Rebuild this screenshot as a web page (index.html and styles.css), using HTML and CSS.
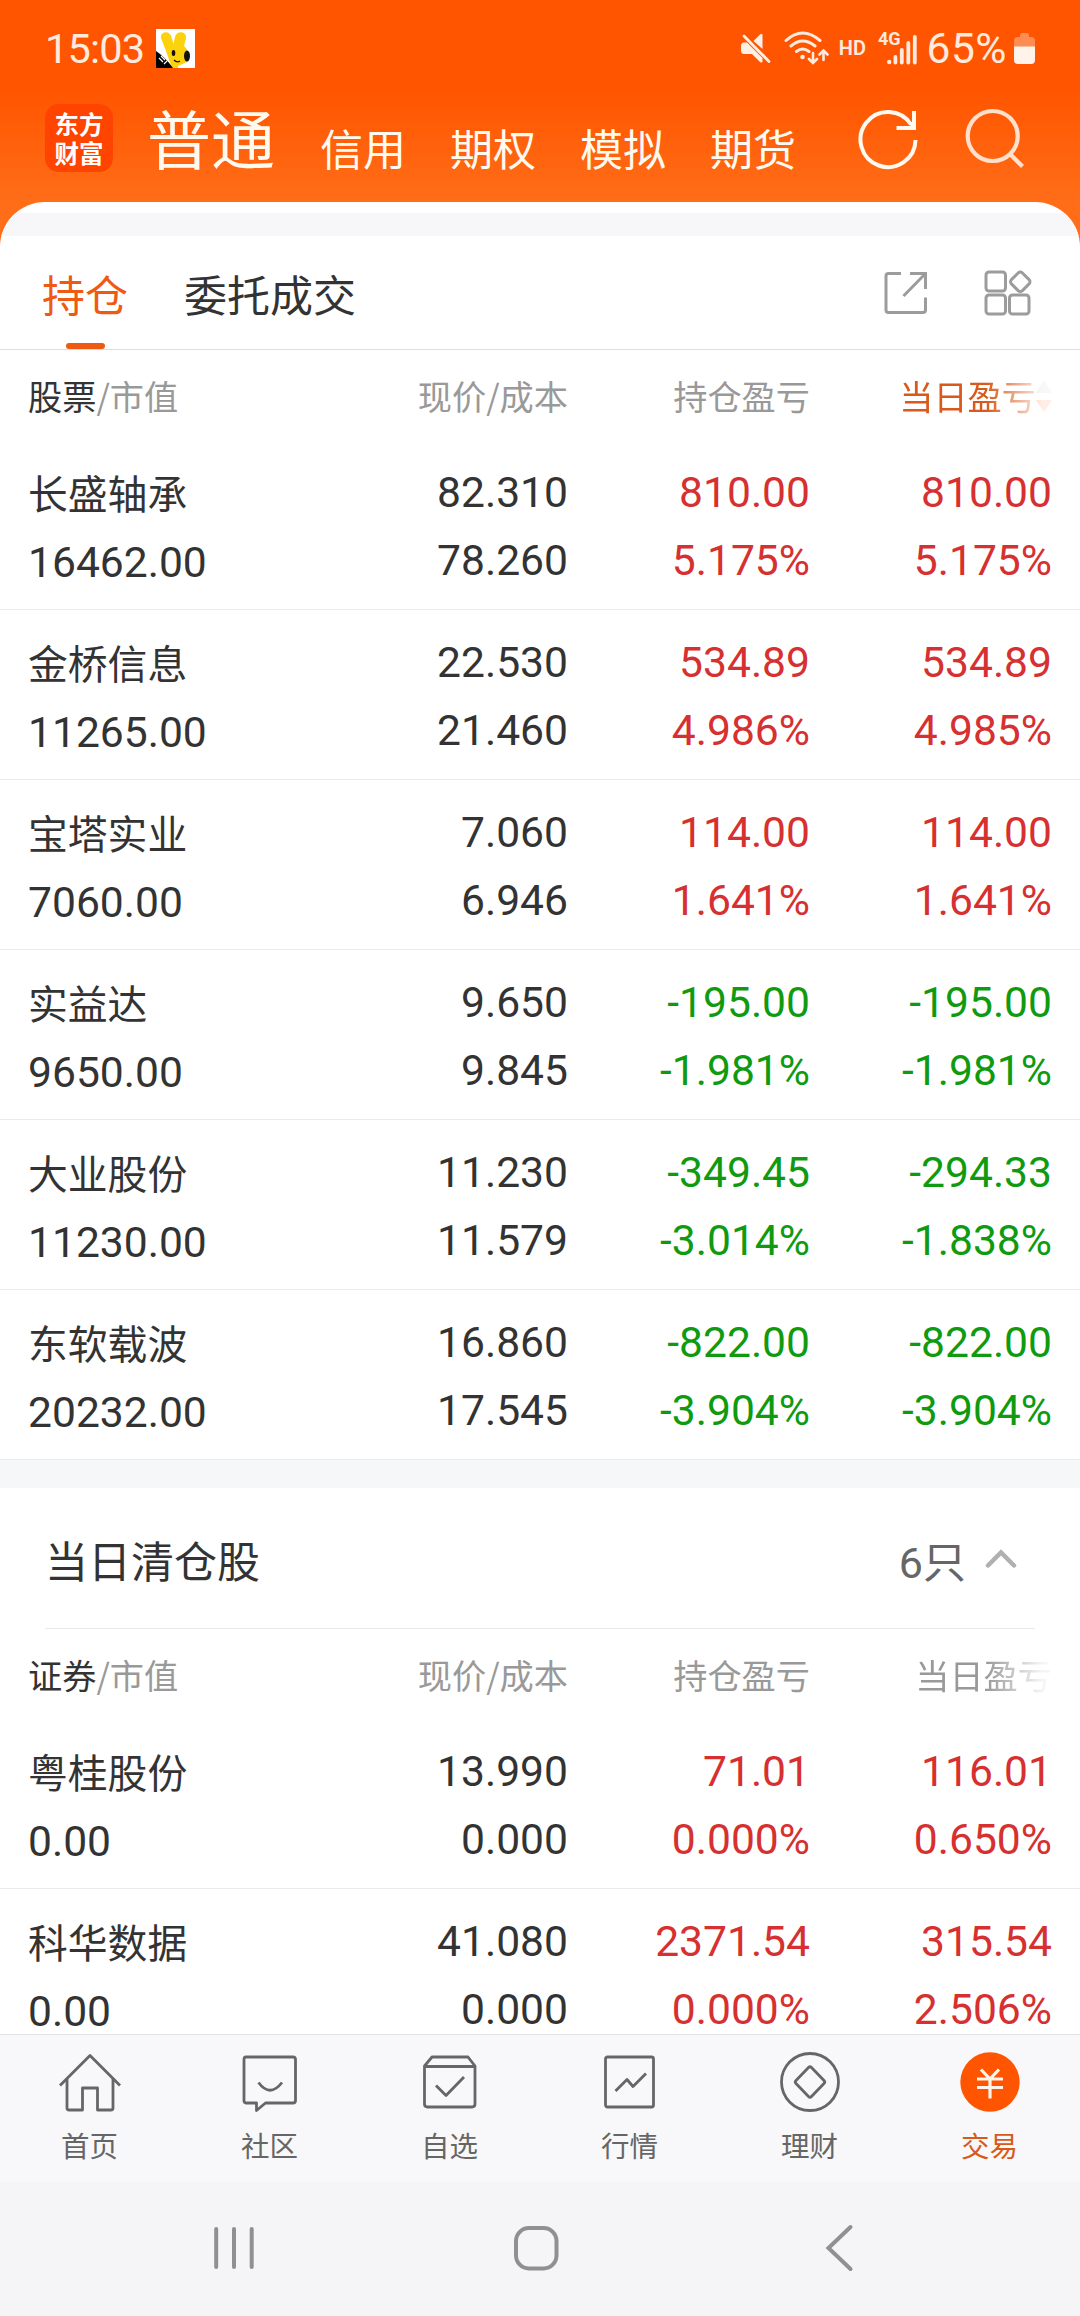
FILE: index.html
```html
<!DOCTYPE html>
<html lang="zh-CN">

<head>
    <meta charset="UTF-8">
    <meta name="viewport" content="width=device-width, initial-scale=1.0">
    <title>持仓</title>
    <link rel="stylesheet" href="styles.css">
</head>

<body>
    <header class="header">
        <!-- 状态栏 -->
        <div class="status-bar">
            <span class="time">15:03</span>
            <svg class="app-notice" width="39" height="39" viewBox="0 0 39 39">
                <rect width="39" height="39" fill="#fff"/>
                <path d="M10 22 L5 9 C4 2 14 1 15.500 8 L17.500 15 L19 8 C20 1 31 2 30 9 L28 17 C33 21 34 28 31 33 L22 37 V39 H16 Z" fill="#fcd20c"/>
                <ellipse cx="17.500" cy="24" rx="1.800" ry="3" fill="#111"/>
                <ellipse cx="31" cy="27" rx="3" ry="5.500" fill="#111"/>
                <path d="M18 31 Q21 34 24 32" fill="none" stroke="#111" stroke-width="1.200"/>
                <path d="M0 22 Q9 28 17 39 H0 Z" fill="#000"/>
                <path d="M3 29 L7 33 M5 27 L9 31 M8 35 L11 32" stroke="#fff" stroke-width="1.200"/>
            </svg>
            <div class="status-icons">
                <svg class="mute" width="30" height="30" viewBox="0 0 30 30">
                    <path d="M0 13 Q0 9.500 3 9.500 H6 L21.500 25 V28 Q21.500 30.500 19 29 L11 21 H3 Q0 21 0 17.500 Z M12.500 8 L19 1.500 Q21.500 -0.500 21.500 2.500 V16 Z" fill="#fff0e6"/>
                    <path d="M3 3 L28 28.500" stroke="#fff0e6" stroke-width="2.800" stroke-linecap="round"/>
                </svg>
                <svg class="wifi" width="45" height="34" viewBox="0 0 45 34" fill="none" stroke="#ffeadd" stroke-width="3" stroke-linecap="round">
                    <path d="M2 9.500 Q18.500 -5.500 36 9.500 M7 15 Q18.500 5 31 15 M12.500 20.500 Q18.500 15.500 25 20.500"/>
                    <circle cx="18.500" cy="26" r="2.300" fill="#ffeadd" stroke="none"/>
                    <path d="M29 22 V31 M25 28 L29 32 L33 28 M39.500 29 V20 M35.500 23.500 L39.500 19.500 L43.500 23.500" stroke-width="2.600"/>
                </svg>
                <span class="hd">HD</span>
                <span class="net">4G</span>
                <svg class="signal" width="30" height="34" viewBox="0 0 30 34" fill="#ffeadd">
                    <circle cx="2.200" cy="31" r="2.200"/>
                    <rect x="6.500" y="24" width="3.800" height="9.500" rx="1.900"/>
                    <rect x="12.900" y="17" width="3.800" height="16.500" rx="1.900"/>
                    <rect x="19.400" y="10" width="3.800" height="23.500" rx="1.900"/>
                    <rect x="25.900" y="4" width="3.800" height="29.500" rx="1.900"/>
                </svg>
                <span class="percent">65%</span>
                <svg class="battery" width="21" height="31" viewBox="0 0 21 31">
                    <path d="M6 4 V2 Q6 0 8 0 H13 Q15 0 15 2 V4 H17 Q21 4 21 8 V14 H0 V8 Q0 4 4 4 Z" fill="#ff8c52"/>
                    <path d="M0 13.500 H21 V27 Q21 31 17 31 H4 Q0 31 0 27 Z" fill="#fff3eb"/>
                </svg>
            </div>
        </div>

        <!-- 账户类型 -->
        <div class="account-bar">
            <div class="logo"><span>东方</span><span>财富</span></div>
            <span class="account active">普通</span>
            <span class="account">信用</span>
            <span class="account">期权</span>
            <span class="account">模拟</span>
            <span class="account">期货</span>
            <svg class="refresh" width="62" height="64" viewBox="0 0 62 64" fill="none" stroke="#fff9f0" stroke-width="4">
                <path d="M58.500 33 A27.500 27.500 0 1 1 54 17.500"/>
                <path d="M39.500 21 H57 V4"/>
                <path d="M48 11 L57 20" stroke-width="3"/>
            </svg>
            <svg class="search" width="60" height="60" viewBox="0 0 60 60" fill="none" stroke="#ffe0cc" stroke-width="4.200">
                <circle cx="27.700" cy="28" r="25"/>
                <path d="M45 46 L57.500 58.500"/>
            </svg>
        </div>
    </header>

    <main class="sheet">
        <div class="band"></div>
        <div class="tabs">
            <span class="tab active">持仓</span>
            <span class="tab">委托成交</span>
            <svg class="export" width="44" height="44" viewBox="0 0 44 44" fill="none" stroke="#9c9c9c" stroke-width="3">
                <path d="M17 2.500 H4.500 Q2 2.500 2 5 V39 Q2 41.500 4.500 41.500 H39 Q41.500 41.500 41.500 39 V26.500"/>
                <path d="M26 2.500 H41.500 V18 M41.500 2.500 L19.500 25"/>
            </svg>
            <svg class="grid-icon" width="48" height="46" viewBox="0 0 48 46" fill="none" stroke="#9c9c9c" stroke-width="3">
                <rect x="2" y="2" width="19.500" height="19" rx="3"/>
                <rect x="2" y="25" width="19.500" height="19" rx="3"/>
                <rect x="25.500" y="25" width="19.500" height="19" rx="3"/>
                <rect x="28.500" y="4" width="15.500" height="15.500" rx="3" transform="rotate(45 36.200 11.800)"/>
            </svg>
        </div>

        <!-- 当前持仓 -->
        <div class="row-head">
            <span><b>股票</b>/市值</span>
            <span>现价/成本</span>
            <span>持仓盈亏</span>
            <span class="sort fade">当日盈亏<svg width="16" height="34" viewBox="0 0 16 34"><path d="M8 1 L16 14 H0 Z" fill="#bbb"/><path d="M0 21 H16 L8 33 Z" fill="#ff5500"/></svg></span>
        </div>
        <div class="row">
            <div class="stock"><p>长盛轴承</p><p>16462.00</p></div>
            <div><p>82.310</p><p>78.260</p></div>
            <div class="up"><p>810.00</p><p>5.175%</p></div>
            <div class="up"><p>810.00</p><p>5.175%</p></div>
        </div>
        <div class="row">
            <div class="stock"><p>金桥信息</p><p>11265.00</p></div>
            <div><p>22.530</p><p>21.460</p></div>
            <div class="up"><p>534.89</p><p>4.986%</p></div>
            <div class="up"><p>534.89</p><p>4.985%</p></div>
        </div>
        <div class="row">
            <div class="stock"><p>宝塔实业</p><p>7060.00</p></div>
            <div><p>7.060</p><p>6.946</p></div>
            <div class="up"><p>114.00</p><p>1.641%</p></div>
            <div class="up"><p>114.00</p><p>1.641%</p></div>
        </div>
        <div class="row">
            <div class="stock"><p>实益达</p><p>9650.00</p></div>
            <div><p>9.650</p><p>9.845</p></div>
            <div class="down"><p>-195.00</p><p>-1.981%</p></div>
            <div class="down"><p>-195.00</p><p>-1.981%</p></div>
        </div>
        <div class="row">
            <div class="stock"><p>大业股份</p><p>11230.00</p></div>
            <div><p>11.230</p><p>11.579</p></div>
            <div class="down"><p>-349.45</p><p>-3.014%</p></div>
            <div class="down"><p>-294.33</p><p>-1.838%</p></div>
        </div>
        <div class="row">
            <div class="stock"><p>东软载波</p><p>20232.00</p></div>
            <div><p>16.860</p><p>17.545</p></div>
            <div class="down"><p>-822.00</p><p>-3.904%</p></div>
            <div class="down"><p>-822.00</p><p>-3.904%</p></div>
        </div>

        <div class="band band-mid"></div>

        <!-- 当日清仓 -->
        <div class="section-title">
            <span>当日清仓股</span>
            <span class="count">6只</span>
            <svg width="32" height="20" viewBox="0 0 32 20" fill="none" stroke="#b0b0b0" stroke-width="4.500" stroke-linecap="round">
                <path d="M3 16.500 L16 3.500 L29 16.500"/>
            </svg>
        </div>
        <div class="row-head">
            <span><b>证券</b>/市值</span>
            <span>现价/成本</span>
            <span>持仓盈亏</span>
            <span class="fade">当日盈亏</span>
        </div>
        <div class="row">
            <div class="stock"><p>粤桂股份</p><p>0.00</p></div>
            <div><p>13.990</p><p>0.000</p></div>
            <div class="up"><p>71.01</p><p>0.000%</p></div>
            <div class="up"><p>116.01</p><p>0.650%</p></div>
        </div>
        <div class="row last">
            <div class="stock"><p>科华数据</p><p>0.00</p></div>
            <div><p>41.080</p><p>0.000</p></div>
            <div class="up"><p>2371.54</p><p>0.000%</p></div>
            <div class="up"><p>315.54</p><p>2.506%</p></div>
        </div>
    </main>

    <!-- 底部导航 -->
    <nav class="tab-bar">
        <a class="item">
            <svg width="64" height="64" viewBox="0 0 64 64">
                <path d="M2 34.500 L32 4.500 L62 34.500"/>
                <path d="M9 28 V57 Q9 59 11 59 H24.500 V37 H39.500 V59 H53 Q55 59 55 57 V28"/>
            </svg>
            首页
        </a>
        <a class="item">
            <svg width="64" height="64" viewBox="0 0 64 64">
                <path d="M8 6 H55 Q57.500 6 57.500 8.500 V49.500 Q57.500 52 55 52 H27.500 L18.500 59.500 V52 H8 Q6 52 6 49.500 V8.500 Q6 6 8 6 Z"/>
                <path d="M20.500 31.500 Q32 47 44 31.500"/>
            </svg>
            社区
        </a>
        <a class="item">
            <svg width="64" height="64" viewBox="0 0 64 64">
                <path d="M6.500 15 L14 6 H50 L57 15 V53 Q57 56 54 56 H9.500 Q6.500 56 6.500 53 Z M6.500 15.500 H57"/>
                <path d="M18 34.500 L28 44.500 L46 26"/>
            </svg>
            自选
        </a>
        <a class="item">
            <svg width="64" height="64" viewBox="0 0 64 64">
                <rect x="7.500" y="6" width="48" height="50" rx="2"/>
                <path d="M17.500 40 L29 28.500 L35 35.500 L48 22.500"/>
            </svg>
            行情
        </a>
        <a class="item">
            <svg width="64" height="64" viewBox="0 0 64 64">
                <circle cx="32" cy="31" r="28.500"/>
                <path d="M30.500 16.500 Q32 15 33.500 16.500 L46 29.500 Q47.500 31 46 32.500 L33.500 45.500 Q32 47 30.500 45.500 L18 32.500 Q16.500 31 18 29.500 Z"/>
            </svg>
            理财
        </a>
        <a class="item active">
            <svg width="64" height="64" viewBox="0 0 64 64">
                <circle cx="32" cy="31" r="29.700"/>
                <path d="M23 18.500 L32 28 L41 18.500 M19 28 H45 M19 36.500 H45 M32 28 V47.500"/>
            </svg>
            交易
        </a>
    </nav>

    <!-- 系统按键 -->
    <footer class="system-bar">
        <svg class="recent" width="44" height="48" viewBox="0 0 44 48"><path d="M4.200 5 V43 M22 5 V43 M39.700 5 V43"/></svg>
        <svg class="home" width="48" height="48" viewBox="0 0 48 48"><rect x="4" y="4" width="40.500" height="40.500" rx="13"/></svg>
        <svg class="back" width="30" height="48" viewBox="0 0 30 48"><path d="M26.500 3 L4.500 24 L26.500 45"/></svg>
    </footer>
</body>

</html>
```
FILE: styles.css
```css
* {
    box-sizing: border-box;
}

body {
    margin: 0;
    width: 1080px;
    height: 2316px;
    display: flex;
    flex-direction: column;
    overflow: hidden;
    font-family: 'Noto Sans CJK SC', sans-serif;
    font-weight: 400;
    color: #333;
    background: linear-gradient(#ff5500 90px, #ff6d18 200px);
}

p {
    margin: 0;
}

svg {
    display: block;
    flex-shrink: 0;
}

/* 顶部 */
.header {
    height: 202px;
    flex-shrink: 0;
}

.status-bar {
    display: flex;
    align-items: center;
    height: 96px;
    padding: 0 45px;
    font-family: Roboto, sans-serif;
    color: #ffeadd;
}

.time {
    width: 111px;
    font-size: 41.500px;
    letter-spacing: -0.800px;
}

.status-icons {
    display: flex;
    align-items: center;
    margin-left: auto;
}

.wifi {
    margin-left: 13px;
}

.hd {
    margin-left: 10px;
    font-size: 20px;
    font-weight: 600;
}

.net {
    align-self: flex-start;
    margin: 4px 0 0 12px;
    font-size: 18px;
    font-weight: 700;
}

.signal {
    margin-left: -14px;
}

.percent {
    margin-left: 10px;
    font-size: 42.500px;
    letter-spacing: 0.500px;
}

.battery {
    margin-left: 7px;
}

.account-bar {
    display: flex;
    align-items: flex-end;
    height: 82px;
    padding-left: 45px;
    color: #fffaf0;
}

.logo {
    display: flex;
    flex-direction: column;
    justify-content: center;
    width: 68px;
    height: 68px;
    margin: 0 34px 6px 0;
    border-radius: 14px;
    background-color: #ff4400;
    font-size: 24.500px;
    font-weight: 700;
    line-height: 29px;
    text-align: center;
    color: #fff;
}

.account {
    width: 86px;
    margin-right: 44px;
    font-size: 43px;
    line-height: 62px;
    white-space: nowrap;
}

.account.active {
    width: 128px;
    margin-right: 45px;
    font-size: 64px;
    line-height: 84px;
}

.refresh {
    margin: 0 0 7px 17px;
}

.search {
    margin: 0 0 10px 46px;
}

/* 内容区 */
.sheet {
    flex: 1;
    min-height: 0;
    overflow: hidden;
    padding-top: 11px;
    border-radius: 45px 45px 0 0;
    background-color: #fff;
}

.band {
    height: 23px;
    background-color: #f7f7fa;
}

.band-mid {
    height: 28px;
    background-color: #f6f7f9;
}

.tabs {
    display: flex;
    align-items: center;
    height: 114px;
    padding: 0 48px 0 42px;
    border-bottom: 1px solid #ddd;
    font-size: 43px;
}

.tab {
    position: relative;
    height: 113px;
    margin-right: 56px;
    line-height: 115px;
}

.tab.active {
    color: #ee5a12;
}

.tab.active::after {
    content: '';
    position: absolute;
    left: 24px;
    bottom: 0;
    width: 39px;
    height: 6px;
    border-radius: 3px;
    background-color: #ee5a12;
}

.export {
    margin-left: auto;
}

.grid-icon {
    margin-left: 56px;
}

.row-head,
.row {
    display: grid;
    grid-template-columns: 1fr 242px 242px 242px;
    padding: 0 28px;
    text-align: right;
}

.row-head {
    height: 90px;
    font-size: 34.200px;
    line-height: 91px;
    color: #999;
}

.row-head span:first-child {
    text-align: left;
}

.row-head b {
    font-weight: 400;
    color: #333;
}

.sort {
    display: flex;
    align-items: center;
    justify-content: flex-end;
    color: #d9591a;
}

/* 右侧渐隐 */
.fade {
    -webkit-mask-image: linear-gradient(to right, #000 176px, rgba(0, 0, 0, 0.1) 232px);
    mask-image: linear-gradient(to right, #000 176px, rgba(0, 0, 0, 0.1) 232px);
}

.row {
    height: 170px;
    padding-top: 18px;
    border-bottom: 1px solid #ebebeb;
    font-family: Roboto, sans-serif;
    font-size: 42.600px;
    line-height: 68px;
}

.row.last {
    height: 146px;
    border-bottom: none;
}

.stock {
    text-align: left;
}

.stock p:first-child {
    margin-bottom: 2px;
    font-family: 'Noto Sans CJK SC', sans-serif;
    font-size: 39.800px;
}

.row.last .stock p:last-child {
    padding-top: 10px;
    line-height: 48px;
}

.up {
    color: #d63031;
}

.down {
    color: #0f9a0f;
}

.section-title {
    display: flex;
    align-items: center;
    height: 141px;
    margin: 0 45px;
    padding: 2px 18px 0 0;
    border-bottom: 1px solid #e8e8e8;
    font-size: 43px;
}

.count {
    margin-left: auto;
    margin-right: 19px;
    font-family: Roboto, 'Noto Sans CJK SC', sans-serif;
    color: #666;
}

/* 底部 */
.tab-bar {
    display: flex;
    height: 148px;
    flex-shrink: 0;
    border-top: 1px solid #e2e2e2;
    background-color: #f8f8fa;
}

.item {
    display: flex;
    flex-direction: column;
    align-items: center;
    width: 180px;
    padding: 16px 1px 0 0;
    font-size: 28.500px;
    line-height: 60px;
    color: #666;
}

.item svg {
    fill: none;
    stroke: #666;
    stroke-width: 2.800;
    stroke-linejoin: round;
}

.item.active {
    color: #d9591a;
}

.item.active circle {
    fill: #ff5500;
    stroke: none;
}

.item.active path {
    stroke: #fff3eb;
    stroke-width: 3.200;
}

.system-bar {
    display: flex;
    align-items: center;
    height: 134px;
    flex-shrink: 0;
    padding: 0 0 2px 212px;
    background-color: #f5f5f7;
}

.system-bar svg {
    fill: none;
    stroke: #909090;
    stroke-width: 4;
    stroke-linecap: round;
}

.home {
    margin: 0 264px 0 256px;
}
```
